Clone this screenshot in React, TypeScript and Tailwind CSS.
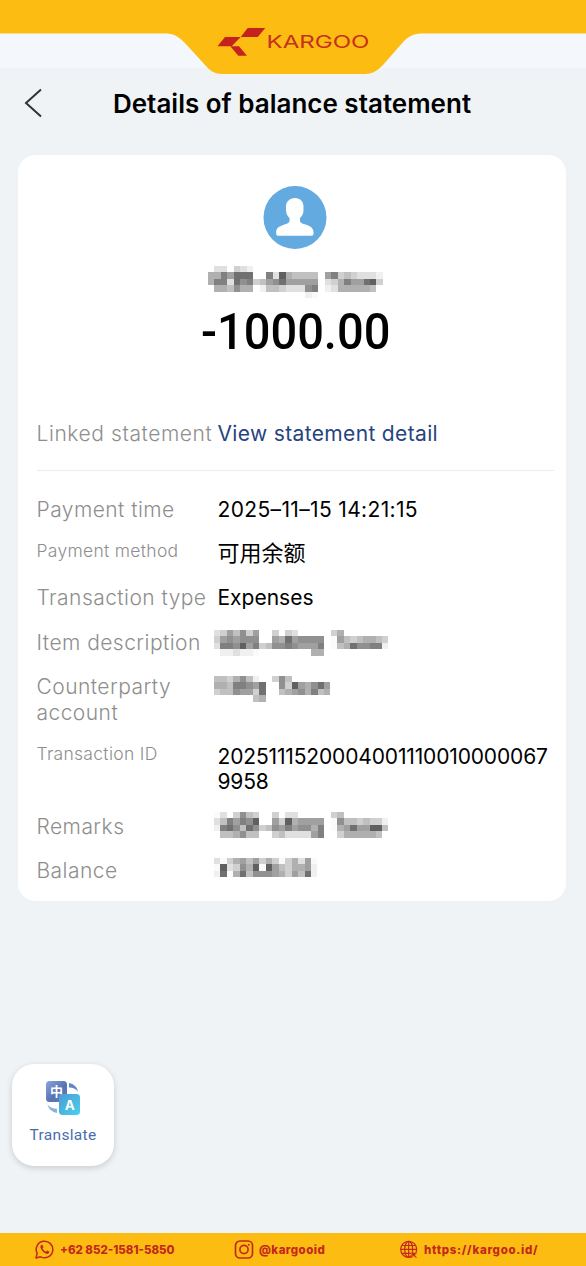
import type { ReactNode } from "react";

// Each character is one grey tile, from 0 (dark) to f (light); a dot is empty.
const NAME_TILES = [
  ".dd.cde....................",
  "aa79666..7d5abbbb.97cbcddde",
  "a77d687cb98699999.dca79965c",
  ".aab8aa.ebbcddd87.edaaaaab.",
  "...............ef..........",
];

const ITEM_TILES = [
  "dc9b8c9..c.cd.....ca.......",
  "c989888..9a698888.f9bcbaabc",
  "d778597cb88789997.fba68877e",
  ".eedeef........aa..........",
];

const COUNTERPARTY_TILES = [
  "bbca8be..c8b......",
  "aab77896..8c59a869",
  "cbb899c6..ba98a7ba",
  "......ba..........",
];

const REMARKS_TILES = [
  "fd.c8bc..c.dd.....cb.......",
  "db79785..9c5a9999.f8bbcbcce",
  "e768b68cb897988a7.fa969955b",
  ".bba8bb..cbdddd97..caaaaab.",
];

const BALANCE_TILES = [
  "dfca9b9cacfcad9f",
  "f5dc8a5f59bcaa9e",
  "e6fa6b8889ac9b6e",
];

function Mosaic({ rows, label }: { rows: string[]; label: string }) {
  const cell = 6.48;
  return (
    <svg
      width={rows[1].length * cell}
      height={rows.length * cell}
      aria-label={label}
      className="block"
      shapeRendering="crispEdges"
    >
      {rows.flatMap((row, y) =>
        row.split("").map((c, x) => {
          if (c === ".") return null;
          const v = Math.min(250, parseInt(c, 16) * 16 + 16);
          return (
            <rect key={`${x}-${y}`} x={x * cell} y={y * cell} width={cell} height={cell} fill={`rgb(${v},${v},${v})`} />
          );
        }),
      )}
    </svg>
  );
}

function Row({ label, small, children }: { label: string; small?: boolean; children: ReactNode }) {
  return (
    <div className="grid grid-cols-[181px_1fr]">
      <div
        className={
          small
            ? "text-[17.5px] leading-[20px] font-light tracking-[0.3px] text-[#8e8e8e]"
            : "text-[21px] leading-[25.6px] font-light tracking-[0.45px] text-[#8e8e8e]"
        }
      >
        {label}
      </div>
      <div className="text-[21px] leading-[25.6px] text-black">{children}</div>
    </div>
  );
}

function Header() {
  return (
    <header className="h-[74px] bg-[linear-gradient(#f4f8fc_68px,#eff3f6_68px)]">
      <svg width="586" height="75" viewBox="0 0 586 75" className="block">
        <path
          d="M0 0H586V33.5H423C414 33.5 409 36 404 41L383 65C377 71 372 74 365 74H222C215 74 210 71 205 65L184 42C178 36 173 33.5 165 33.5H0Z"
          fill="#fdbc11"
        />
        <g fill="#c5221f">
          <path d="M247.7 28H265.3L257.7 37H240.7Z" />
          <path d="M225 37H240.7L231.7 46.3H217.5Z" />
          <path d="M230.3 46.3H239L247 55.7H238.3Z" />
        </g>
        <text
          x="266.5"
          y="47.800"
          fontFamily="Inter, sans-serif"
          fontWeight="400"
          fontSize="17"
          textLength="103"
          lengthAdjust="spacingAndGlyphs"
          fill="#c5301f"
        >
          KARGOO
        </text>
      </svg>
    </header>
  );
}

function TranslateIcon() {
  return (
    <svg width="36" height="36" viewBox="0 0 36 36">
      <defs>
        <linearGradient id="back" x1="0" y1="0" x2="1" y2="1">
          <stop offset="0" stopColor="#8ea3d8" />
          <stop offset=".55" stopColor="#5874b5" />
          <stop offset="1" stopColor="#5b80c2" />
        </linearGradient>
        <linearGradient id="front" x1="0" y1="0" x2="1" y2="1">
          <stop offset="0" stopColor="#4c9bd4" />
          <stop offset="1" stopColor="#49d1ee" />
        </linearGradient>
      </defs>
      <rect x="1" y="1" width="21" height="21" rx="3.500" fill="url(#back)" />
      <rect x="14" y="14" width="21" height="21" rx="3.500" fill="url(#front)" />
      <path d="M24 3C29 4 32 7 33 11.500C30.500 8.800 28 7.800 24 7.500Z" fill="#6685c7" />
      <path d="M2.500 24.500C5 27.500 8 28.500 12 28.800V33C7 32 3.500 29 2.500 24.500Z" fill="#8eafdc" />
      <text x="11.500" y="16" fontSize="13" fontWeight="700" textAnchor="middle" fill="white" fontFamily="Noto Sans CJK SC, sans-serif">
        中
      </text>
      <text x="24.700" y="29.600" fontSize="13.500" fontWeight="700" textAnchor="middle" fill="white" fontFamily="Inter, sans-serif">
        A
      </text>
    </svg>
  );
}

function Footer() {
  return (
    <footer className="mt-auto flex h-[33px] items-center bg-[#fdbc11] text-[11.5px] leading-none font-extrabold text-[#c3281b]">
      <div className="flex w-[198px] items-center gap-[6px] pl-[35px]">
        <svg width="19" height="19" viewBox="0 0 19 19" fill="none" stroke="currentColor" strokeWidth="1.500">
          <path d="M1 18L2.200 13.400A8.300 8.300 0 1 1 5.600 16.800Z" strokeLinejoin="round" />
          <path
            d="M6.700 4.800C5 5.500 5 7.500 6.200 9.200C7.500 11.500 9.300 13.200 11.900 13.900C13.300 14 14.300 13 14.400 11.600L12.200 10.400L10.900 11.700C9.400 11 8.400 10 7.600 8.500L8.500 7.300L7.600 5Z"
            fill="currentColor"
            stroke="none"
          />
        </svg>
        <span className="pt-[2px] whitespace-nowrap">+62 852-1581-5850</span>
      </div>
      <div className="flex w-[165px] items-center gap-[5px] pl-[36px]">
        <svg width="20" height="19" viewBox="0 0 20 19" fill="none" stroke="currentColor" strokeWidth="1.700">
          <rect x="1.500" y="1" width="17" height="17" rx="4.500" />
          <circle cx="10" cy="9.500" r="4.100" />
          <circle cx="14.800" cy="4.700" r="1" fill="currentColor" stroke="none" />
        </svg>
        <span className="pt-[2px] tracking-[0.45px]">@kargooid</span>
      </div>
      <div className="flex items-center gap-[6px] pl-[37px]">
        <svg width="18" height="19" viewBox="0 0 18 19" fill="none" stroke="currentColor" strokeWidth="1.200">
          <circle cx="8.700" cy="9.300" r="8" />
          <ellipse cx="8.700" cy="9.300" rx="4" ry="8" />
          <path d="M8.700 1.300V17.300M2 5.500H15.500M.7 9.300H16.700M2 13.300H12" />
          <path
            d="M11 11.300L17.500 13.800L14.900 15L17 17.200L16 18.200L13.800 16L12.700 18Z"
            fill="currentColor"
            stroke="#fdbc11"
            strokeWidth=".5"
          />
        </svg>
        <span className="pt-[2px] tracking-[0.7px]">https://kargoo.id/</span>
      </div>
    </footer>
  );
}

export default function App() {
  return (
    <div className="flex h-[1266px] w-[586px] flex-col overflow-hidden bg-[#eff3f6] font-['Inter','Noto_Sans_CJK_SC',sans-serif]">
      <Header />
      <div className="grid h-[81px] grid-cols-[70px_1fr_72px] items-start pt-[14px]">
        <svg width="19" height="30" viewBox="0 0 19 30" className="ml-[24px]" fill="none" stroke="#303236" strokeWidth="2">
          <path d="M17 1.500L2 15L17 28.500" />
        </svg>
        <h1 className="text-center text-[26px] leading-[31px] font-semibold whitespace-nowrap text-black">
          Details of balance statement
        </h1>
      </div>

      <main className="mr-[20px] ml-[18px] flex h-[746px] shrink-0 flex-col rounded-[18px] bg-white pl-[18.5px]">
        <div className="flex h-[252px] flex-col items-center pt-[31px] pr-[12px]">
          <svg width="64" height="63" viewBox="0 0 64 63" className="shrink-0">
            <circle cx="32" cy="31.500" r="31.500" fill="#62aadf" />
            <path
              d="M32 12C37 12 40.500 15.500 40.500 20.500V24C40.500 28 39 30 37 32V35C37 37 41 38 44.500 39.300C48.500 41 50.500 43 50.500 46V48Q50.500 49.700 48.500 49.700H15Q13.200 49.700 13.200 48V46C13.200 43 15 41 19.500 39.300C23 38 26.500 37 26.500 35V32C24.500 30 23 28 23 24V20.500C23 15.500 27 12 32 12Z"
              fill="white"
            />
          </svg>
          <div className="mt-[17px] h-[33px]">
            <Mosaic rows={NAME_TILES} label="Account name" />
          </div>
          <div className="mt-[5px] scale-x-[0.94] font-['Roboto',sans-serif] text-[50px] leading-[56px] font-medium whitespace-nowrap text-black">
            -1000.00
          </div>
        </div>
        <div className="mr-[12px] flex h-[64px] items-start border-b border-[#ececec] pt-[14px]">
          <div className="w-[181px] text-[21px] leading-[25.6px] font-light tracking-[0.58px] whitespace-nowrap text-[#8e8e8e]">
            Linked statement
          </div>
          <div className="text-[21px] leading-[25.6px] tracking-[0.35px] whitespace-nowrap text-[#26447f]">
            View statement detail
          </div>
        </div>
        <div className="flex flex-col gap-[18.65px] pt-[26px]">
          <Row label="Payment time">
            <span className="tracking-[0.35px]">2025–11–15 14:21:15</span>
          </Row>
          <Row label="Payment method" small>
            <span className="text-[22px]">可用余额</span>
          </Row>
          <Row label="Transaction type">Expenses</Row>
          <Row label="Item description">
            <div className="-ml-[4px] h-[25.6px]">
              <Mosaic rows={ITEM_TILES} label="Item description" />
            </div>
          </Row>
          <Row label="Counterparty account">
            <div className="-ml-[4px] pt-[2px]">
              <Mosaic rows={COUNTERPARTY_TILES} label="Counterparty" />
            </div>
          </Row>
          <Row label="Transaction ID" small>
            <div className="w-[333px] tracking-[-0.15px] break-all">20251115200040011100100000679958</div>
          </Row>
          <Row label="Remarks">
            <div className="-mt-[2px] -ml-[4px] h-[27.6px]">
              <Mosaic rows={REMARKS_TILES} label="Remarks" />
            </div>
          </Row>
          <Row label="Balance">
            <div className="-ml-[4px]">
              <Mosaic rows={BALANCE_TILES} label="Balance" />
            </div>
          </Row>
        </div>
      </main>

      <div className="mt-[163px] ml-[12px] flex h-[102px] w-[102px] shrink-0 flex-col items-center rounded-[22px] bg-white pt-[16px] shadow-[0_2px_6px_rgba(0,0,0,0.16)]">
        <TranslateIcon />
        <div className="mt-[9px] font-['Roboto',sans-serif] text-[15.5px] leading-[20px] tracking-[0.3px] text-[#4a6cae]">
          Translate
        </div>
      </div>

      <Footer />
    </div>
  );
}
